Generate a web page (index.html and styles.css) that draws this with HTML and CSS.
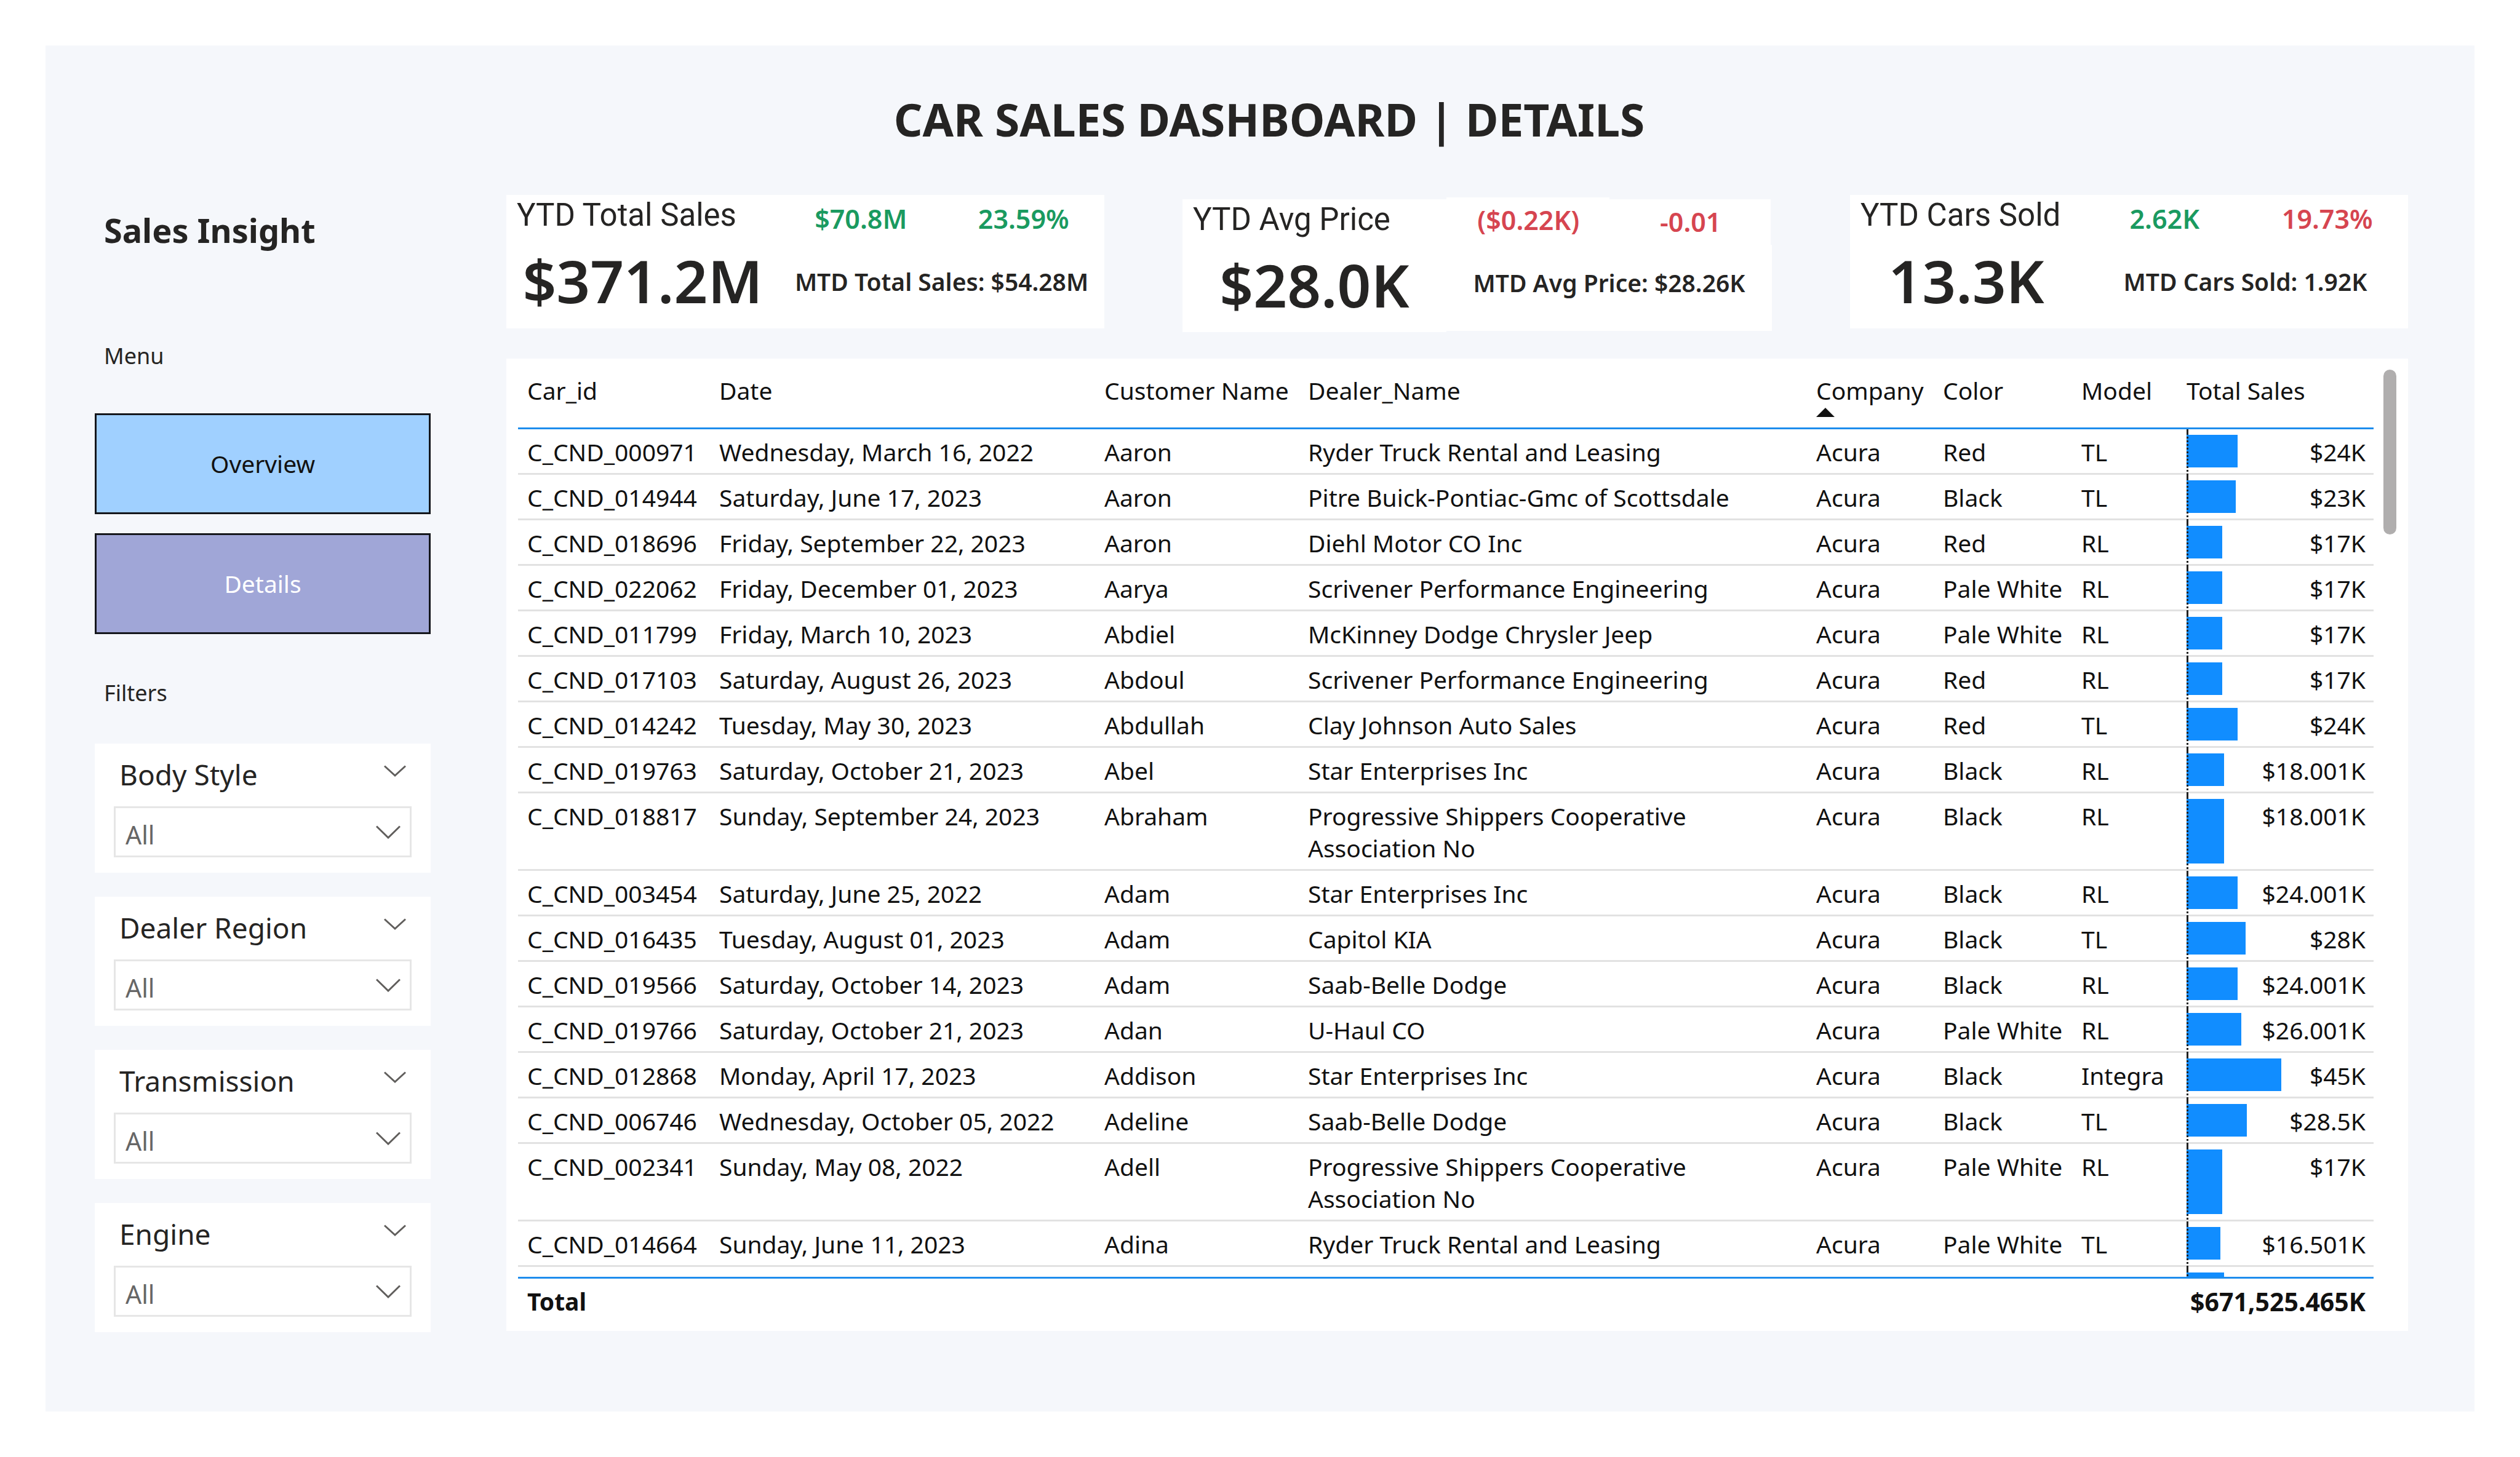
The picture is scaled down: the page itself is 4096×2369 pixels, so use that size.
FILE: index.html
```html
<!DOCTYPE html>
<html lang="en">
<head>
<meta charset="utf-8">
<title>Car Sales Dashboard</title>
<link rel="stylesheet" href="styles.css">
</head>
<body>
<div class="report">
  <h1 class="report-title">CAR SALES DASHBOARD | DETAILS</h1>

  <div class="layout">
    <aside class="sidebar">
      <h2 class="sidebar-title">Sales Insight</h2>
      <p class="sidebar-label">Menu</p>
      <nav class="menu">
        <button type="button" class="menu-button menu-overview">Overview</button>
        <button type="button" class="menu-button menu-details">Details</button>
      </nav>
      <p class="sidebar-label filters-label">Filters</p>
      <div class="filters">
        <section class="filter">
          <div class="filter-head">
            <label for="body-style">Body Style</label>
            <button type="button" class="filter-toggle" aria-label="Body Style options"><svg viewBox="0 0 36 20" class="chevron-small"><path d="M1 1.5 18 17 35 1.5"/></svg></button>
          </div>
          <div class="select-box">
            <select id="body-style"><option>All</option></select>
            <svg viewBox="0 0 40 22" class="chevron"><path d="M1 1.5 20 20 39 1.5"/></svg>
          </div>
        </section>
        <section class="filter">
          <div class="filter-head">
            <label for="dealer-region">Dealer Region</label>
            <button type="button" class="filter-toggle" aria-label="Dealer Region options"><svg viewBox="0 0 36 20" class="chevron-small"><path d="M1 1.5 18 17 35 1.5"/></svg></button>
          </div>
          <div class="select-box">
            <select id="dealer-region"><option>All</option></select>
            <svg viewBox="0 0 40 22" class="chevron"><path d="M1 1.5 20 20 39 1.5"/></svg>
          </div>
        </section>
        <section class="filter">
          <div class="filter-head">
            <label for="transmission">Transmission</label>
            <button type="button" class="filter-toggle" aria-label="Transmission options"><svg viewBox="0 0 36 20" class="chevron-small"><path d="M1 1.5 18 17 35 1.5"/></svg></button>
          </div>
          <div class="select-box">
            <select id="transmission"><option>All</option></select>
            <svg viewBox="0 0 40 22" class="chevron"><path d="M1 1.5 20 20 39 1.5"/></svg>
          </div>
        </section>
        <section class="filter">
          <div class="filter-head">
            <label for="engine">Engine</label>
            <button type="button" class="filter-toggle" aria-label="Engine options"><svg viewBox="0 0 36 20" class="chevron-small"><path d="M1 1.5 18 17 35 1.5"/></svg></button>
          </div>
          <div class="select-box">
            <select id="engine"><option>All</option></select>
            <svg viewBox="0 0 40 22" class="chevron"><path d="M1 1.5 20 20 39 1.5"/></svg>
          </div>
        </section>
      </div>
    </aside>

    <main class="content">
      <div class="kpis">
        <section class="kpi">
          <div class="kpi-main">
            <h3 class="kpi-label">YTD Total Sales</h3>
            <p class="kpi-value">$371.2M</p>
          </div>
          <div class="kpi-side">
            <p class="kpi-change up">$70.8M</p>
            <p class="kpi-change up">23.59%</p>
            <p class="kpi-mtd">MTD Total Sales: $54.28M</p>
          </div>
        </section>
        <section class="kpi kpi-price">
          <div class="kpi-main">
            <h3 class="kpi-label">YTD Avg Price</h3>
            <p class="kpi-value">$28.0K</p>
          </div>
          <div class="kpi-side">
            <p class="kpi-change down">($0.22K)</p>
            <p class="kpi-change kpi-percent down">-0.01</p>
            <p class="kpi-mtd">MTD Avg Price: $28.26K</p>
          </div>
        </section>
        <section class="kpi">
          <div class="kpi-main">
            <h3 class="kpi-label">YTD Cars Sold</h3>
            <p class="kpi-value">13.3K</p>
          </div>
          <div class="kpi-side">
            <p class="kpi-change up">2.62K</p>
            <p class="kpi-change down">19.73%</p>
            <p class="kpi-mtd">MTD Cars Sold: 1.92K</p>
          </div>
        </section>
      </div>

      <section class="table-card">
        <table class="sales">
          <colgroup>
            <col class="col-id"><col class="col-date"><col class="col-customer"><col class="col-dealer">
            <col class="col-company"><col class="col-color"><col class="col-model"><col class="col-sales">
          </colgroup>
          <thead>
            <tr>
              <th scope="col">Car_id</th><th scope="col">Date</th><th scope="col">Customer Name</th><th scope="col">Dealer_Name</th>
              <th scope="col" aria-sort="ascending">Company<svg viewBox="0 0 30 15" class="sort-arrow"><path d="M15 0 30 15H0z"/></svg></th>
              <th scope="col">Color</th><th scope="col">Model</th><th scope="col">Total Sales</th>
            </tr>
          </thead>
          <tbody>
            <tr><td>C_CND_000971</td><td>Wednesday, March 16, 2022</td><td>Aaron</td><td>Ryder Truck Rental and Leasing</td><td>Acura</td><td>Red</td><td>TL</td><td class="amount"><span class="bar" style="width:26%"></span>$24K</td></tr>
            <tr><td>C_CND_014944</td><td>Saturday, June 17, 2023</td><td>Aaron</td><td>Pitre Buick-Pontiac-Gmc of Scottsdale</td><td>Acura</td><td>Black</td><td>TL</td><td class="amount"><span class="bar" style="width:25%"></span>$23K</td></tr>
            <tr><td>C_CND_018696</td><td>Friday, September 22, 2023</td><td>Aaron</td><td>Diehl Motor CO Inc</td><td>Acura</td><td>Red</td><td>RL</td><td class="amount"><span class="bar" style="width:18.2%"></span>$17K</td></tr>
            <tr><td>C_CND_022062</td><td>Friday, December 01, 2023</td><td>Aarya</td><td>Scrivener Performance Engineering</td><td>Acura</td><td>Pale White</td><td>RL</td><td class="amount"><span class="bar" style="width:18.2%"></span>$17K</td></tr>
            <tr><td>C_CND_011799</td><td>Friday, March 10, 2023</td><td>Abdiel</td><td>McKinney Dodge Chrysler Jeep</td><td>Acura</td><td>Pale White</td><td>RL</td><td class="amount"><span class="bar" style="width:18.2%"></span>$17K</td></tr>
            <tr><td>C_CND_017103</td><td>Saturday, August 26, 2023</td><td>Abdoul</td><td>Scrivener Performance Engineering</td><td>Acura</td><td>Red</td><td>RL</td><td class="amount"><span class="bar" style="width:18.2%"></span>$17K</td></tr>
            <tr><td>C_CND_014242</td><td>Tuesday, May 30, 2023</td><td>Abdullah</td><td>Clay Johnson Auto Sales</td><td>Acura</td><td>Red</td><td>TL</td><td class="amount"><span class="bar" style="width:26%"></span>$24K</td></tr>
            <tr><td>C_CND_019763</td><td>Saturday, October 21, 2023</td><td>Abel</td><td>Star Enterprises Inc</td><td>Acura</td><td>Black</td><td>RL</td><td class="amount"><span class="bar" style="width:19.2%"></span>$18.001K</td></tr>
            <tr><td>C_CND_018817</td><td>Sunday, September 24, 2023</td><td>Abraham</td><td>Progressive Shippers Cooperative Association No</td><td>Acura</td><td>Black</td><td>RL</td><td class="amount"><span class="bar" style="width:19.2%"></span>$18.001K</td></tr>
            <tr><td>C_CND_003454</td><td>Saturday, June 25, 2022</td><td>Adam</td><td>Star Enterprises Inc</td><td>Acura</td><td>Black</td><td>RL</td><td class="amount"><span class="bar" style="width:26%"></span>$24.001K</td></tr>
            <tr><td>C_CND_016435</td><td>Tuesday, August 01, 2023</td><td>Adam</td><td>Capitol KIA</td><td>Acura</td><td>Black</td><td>TL</td><td class="amount"><span class="bar" style="width:30%"></span>$28K</td></tr>
            <tr><td>C_CND_019566</td><td>Saturday, October 14, 2023</td><td>Adam</td><td>Saab-Belle Dodge</td><td>Acura</td><td>Black</td><td>RL</td><td class="amount"><span class="bar" style="width:26%"></span>$24.001K</td></tr>
            <tr><td>C_CND_019766</td><td>Saturday, October 21, 2023</td><td>Adan</td><td>U-Haul CO</td><td>Acura</td><td>Pale White</td><td>RL</td><td class="amount"><span class="bar" style="width:27.8%"></span>$26.001K</td></tr>
            <tr><td>C_CND_012868</td><td>Monday, April 17, 2023</td><td>Addison</td><td>Star Enterprises Inc</td><td>Acura</td><td>Black</td><td>Integra</td><td class="amount"><span class="bar" style="width:48.2%"></span>$45K</td></tr>
            <tr><td>C_CND_006746</td><td>Wednesday, October 05, 2022</td><td>Adeline</td><td>Saab-Belle Dodge</td><td>Acura</td><td>Black</td><td>TL</td><td class="amount"><span class="bar" style="width:30.8%"></span>$28.5K</td></tr>
            <tr><td>C_CND_002341</td><td>Sunday, May 08, 2022</td><td>Adell</td><td>Progressive Shippers Cooperative Association No</td><td>Acura</td><td>Pale White</td><td>RL</td><td class="amount"><span class="bar" style="width:18.2%"></span>$17K</td></tr>
            <tr><td>C_CND_014664</td><td>Sunday, June 11, 2023</td><td>Adina</td><td>Ryder Truck Rental and Leasing</td><td>Acura</td><td>Pale White</td><td>TL</td><td class="amount"><span class="bar" style="width:17.3%"></span>$16.501K</td></tr>
            <tr class="cut-off"><td colspan="7"></td><td class="amount"><span class="bar" style="width:19.2%"></span></td></tr>
          </tbody>
          <tfoot>
            <tr><th scope="row" colspan="7">Total</th><td class="amount-total">$671,525.465K</td></tr>
          </tfoot>
        </table>
        <div class="scrollbar"></div>
      </section>
    </main>
  </div>
</div>
</body>
</html>
```
FILE: styles.css
```css
* { box-sizing: border-box; }

body {
  margin: 0;
  padding: 74px;
  background: #fff;
  color: #252423;
  font-family: "Noto Sans", "Open Sans", sans-serif;
  font-size: 39px;
  line-height: 52px;
}

h1, h2, h3, p { margin: 0; }

.report {
  background: #f5f7fb;
  padding: 70px 108px 129px 80px;
}

.report-title {
  padding-left: 58px;
  margin-bottom: 73px;
  font-size: 73px;
  line-height: 100px;
  font-weight: 700;
  text-align: center;
}

.layout {
  display: grid;
  grid-template-columns: 546px 1fr;
  gap: 123px;
}

/* Sidebar */

.sidebar-title {
  padding: 20px 15px 0;
  font-size: 54px;
  line-height: 74px;
  font-weight: 700;
}

.sidebar-label {
  margin-top: 144px;
  padding-left: 15px;
  font-size: 36px;
  line-height: 48px;
}

.filters-label { margin-top: 72px; }

.menu {
  display: grid;
  gap: 31px;
  margin-top: 69px;
}

.menu-button {
  height: 164px;
  border: 3px solid #15171c;
  font: inherit;
}

.menu-overview { background: #a0d0ff; color: #111; }
.menu-details { background: #a0a6d7; color: #fff; }

.filters {
  display: grid;
  gap: 39px;
  margin-top: 58px;
}

.filter {
  padding: 18px 31px 25px;
  background: #fff;
}

.filter-head {
  display: flex;
  justify-content: space-between;
  padding: 0 9px;
  margin-bottom: 20px;
  font-size: 46px;
  line-height: 64px;
}

.filter-toggle {
  align-self: flex-start;
  display: block;
  margin-top: 17px;
  padding: 0;
  border: 0;
  background: none;
}

.chevron-small, .chevron {
  display: block;
  fill: none;
  stroke: #605e5c;
  stroke-width: 3;
}

.chevron-small { width: 36px; height: 20px; }

.select-box {
  display: grid;
  align-items: center;
  height: 83px;
}

.select-box > * { grid-area: 1 / 1; }

.select-box select {
  height: 83px;
  padding: 8px 16px 0;
  border: 3px solid #e6e6e6;
  border-radius: 0;
  background: #fff;
  color: #666;
  font: inherit;
  font-size: 41px;
  appearance: none;
}

.chevron {
  justify-self: end;
  width: 40px;
  height: 22px;
  margin-right: 18px;
  pointer-events: none;
}

/* Key figures */

.content { min-width: 0; }

.kpis {
  display: grid;
  grid-template-columns: 972fr 958fr 907fr;
  gap: 127px;
  align-items: start;
  margin-bottom: 43px;
}

.kpi {
  display: grid;
  grid-template-columns: 1fr 529px;
}

.kpi-main {
  min-height: 217px;
  padding-top: 3px;
  background: #fff;
}

.kpi-label {
  padding-left: 17px;
  font-family: Roboto, sans-serif;
  font-size: 51px;
  line-height: 60px;
  font-weight: 400;
}

.kpi-value {
  padding-top: 16px;
  font-size: 96px;
  line-height: 120px;
  font-weight: 600;
  text-align: center;
}

.kpi-side {
  display: grid;
  grid-template-columns: 1fr 1fr;
  grid-template-rows: 77px 140px;
  text-align: center;
  font-weight: 600;
}

.kpi-change {
  padding: 9px 0 0 2px;
  background: #fff;
  font-size: 43px;
  line-height: 60px;
}

.kpi-mtd {
  grid-column: 1 / 3;
  padding-top: 38px;
  background: #fff;
  font-size: 39px;
}

.up { color: #1a9a60; }
.down { color: #d64550; }

/* The price card is built from tiles that sit a little lower and out of line */
.kpi-price .kpi-main { margin-top: 7px; min-height: 216px; }
.kpi-price .kpi-side { margin-top: 4px; }
.kpi-price .kpi-change { padding-top: 7px; }
.kpi-price .kpi-percent { margin: 3px 2px 0 0; }
.kpi-price .kpi-mtd { padding-top: 36px; }

/* Table */

.table-card {
  display: grid;
  grid-template-columns: 1fr 21px;
  gap: 16px;
  padding: 18px 19px 0;
  background: #fff;
}

.scrollbar {
  height: 268px;
  border-radius: 11px;
  background: #b0aeae;
}

.sales {
  width: 100%;
  table-layout: fixed;
  border-spacing: 0;
  color: #111;
}

.col-id { width: 312px; }
.col-date { width: 626px; }
.col-customer { width: 331px; }
.col-dealer { width: 826px; }
.col-company { width: 206px; }
.col-color { width: 225px; }
.col-model { width: 171px; }
.col-sales { width: 319px; }

.sales th, .sales td {
  padding: 11px 0 8px 15px;
  text-align: left;
  vertical-align: top;
  font-weight: 400;
}

.sales td { border-bottom: 3px solid #e2e2e2; }

.sales thead th {
  padding: 8px 0 0 15px;
  height: 97px;
  white-space: nowrap;
  border-bottom: 3px solid #1d8ced;
}

.sort-arrow {
  display: block;
  width: 30px;
  height: 15px;
  margin-top: 2px;
  fill: #111;
}

.sales .amount {
  position: relative;
  padding-right: 13px;
  text-align: right;
}

/* Zero axis of the data bars, dashed in step with each row */
.amount::after {
  content: "";
  position: absolute;
  top: 0;
  bottom: -3px;
  left: 15px;
  width: 3px;
  background:
    linear-gradient(#222, #222) top / 3px 6px no-repeat,
    repeating-linear-gradient(#222 0 3px, transparent 3px 6px);
}

.bar {
  position: absolute;
  top: 9px;
  bottom: 9px;
  left: 15px;
  background: #118dff;
}

.sales .cut-off td {
  height: 16px;
  padding: 0;
  border: 0;
}

.cut-off .bar { bottom: 0; }
.cut-off .amount::after { bottom: 0; }

.sales tfoot th, .sales tfoot td {
  padding-top: 11px;
  padding-bottom: 22px;
  border-top: 3px solid #1d8ced;
  border-bottom: 0;
  font-weight: 700;
}

.sales .amount-total {
  padding-right: 13px;
  padding-left: 0;
  font-size: 41px;
  text-align: right;
}
```
